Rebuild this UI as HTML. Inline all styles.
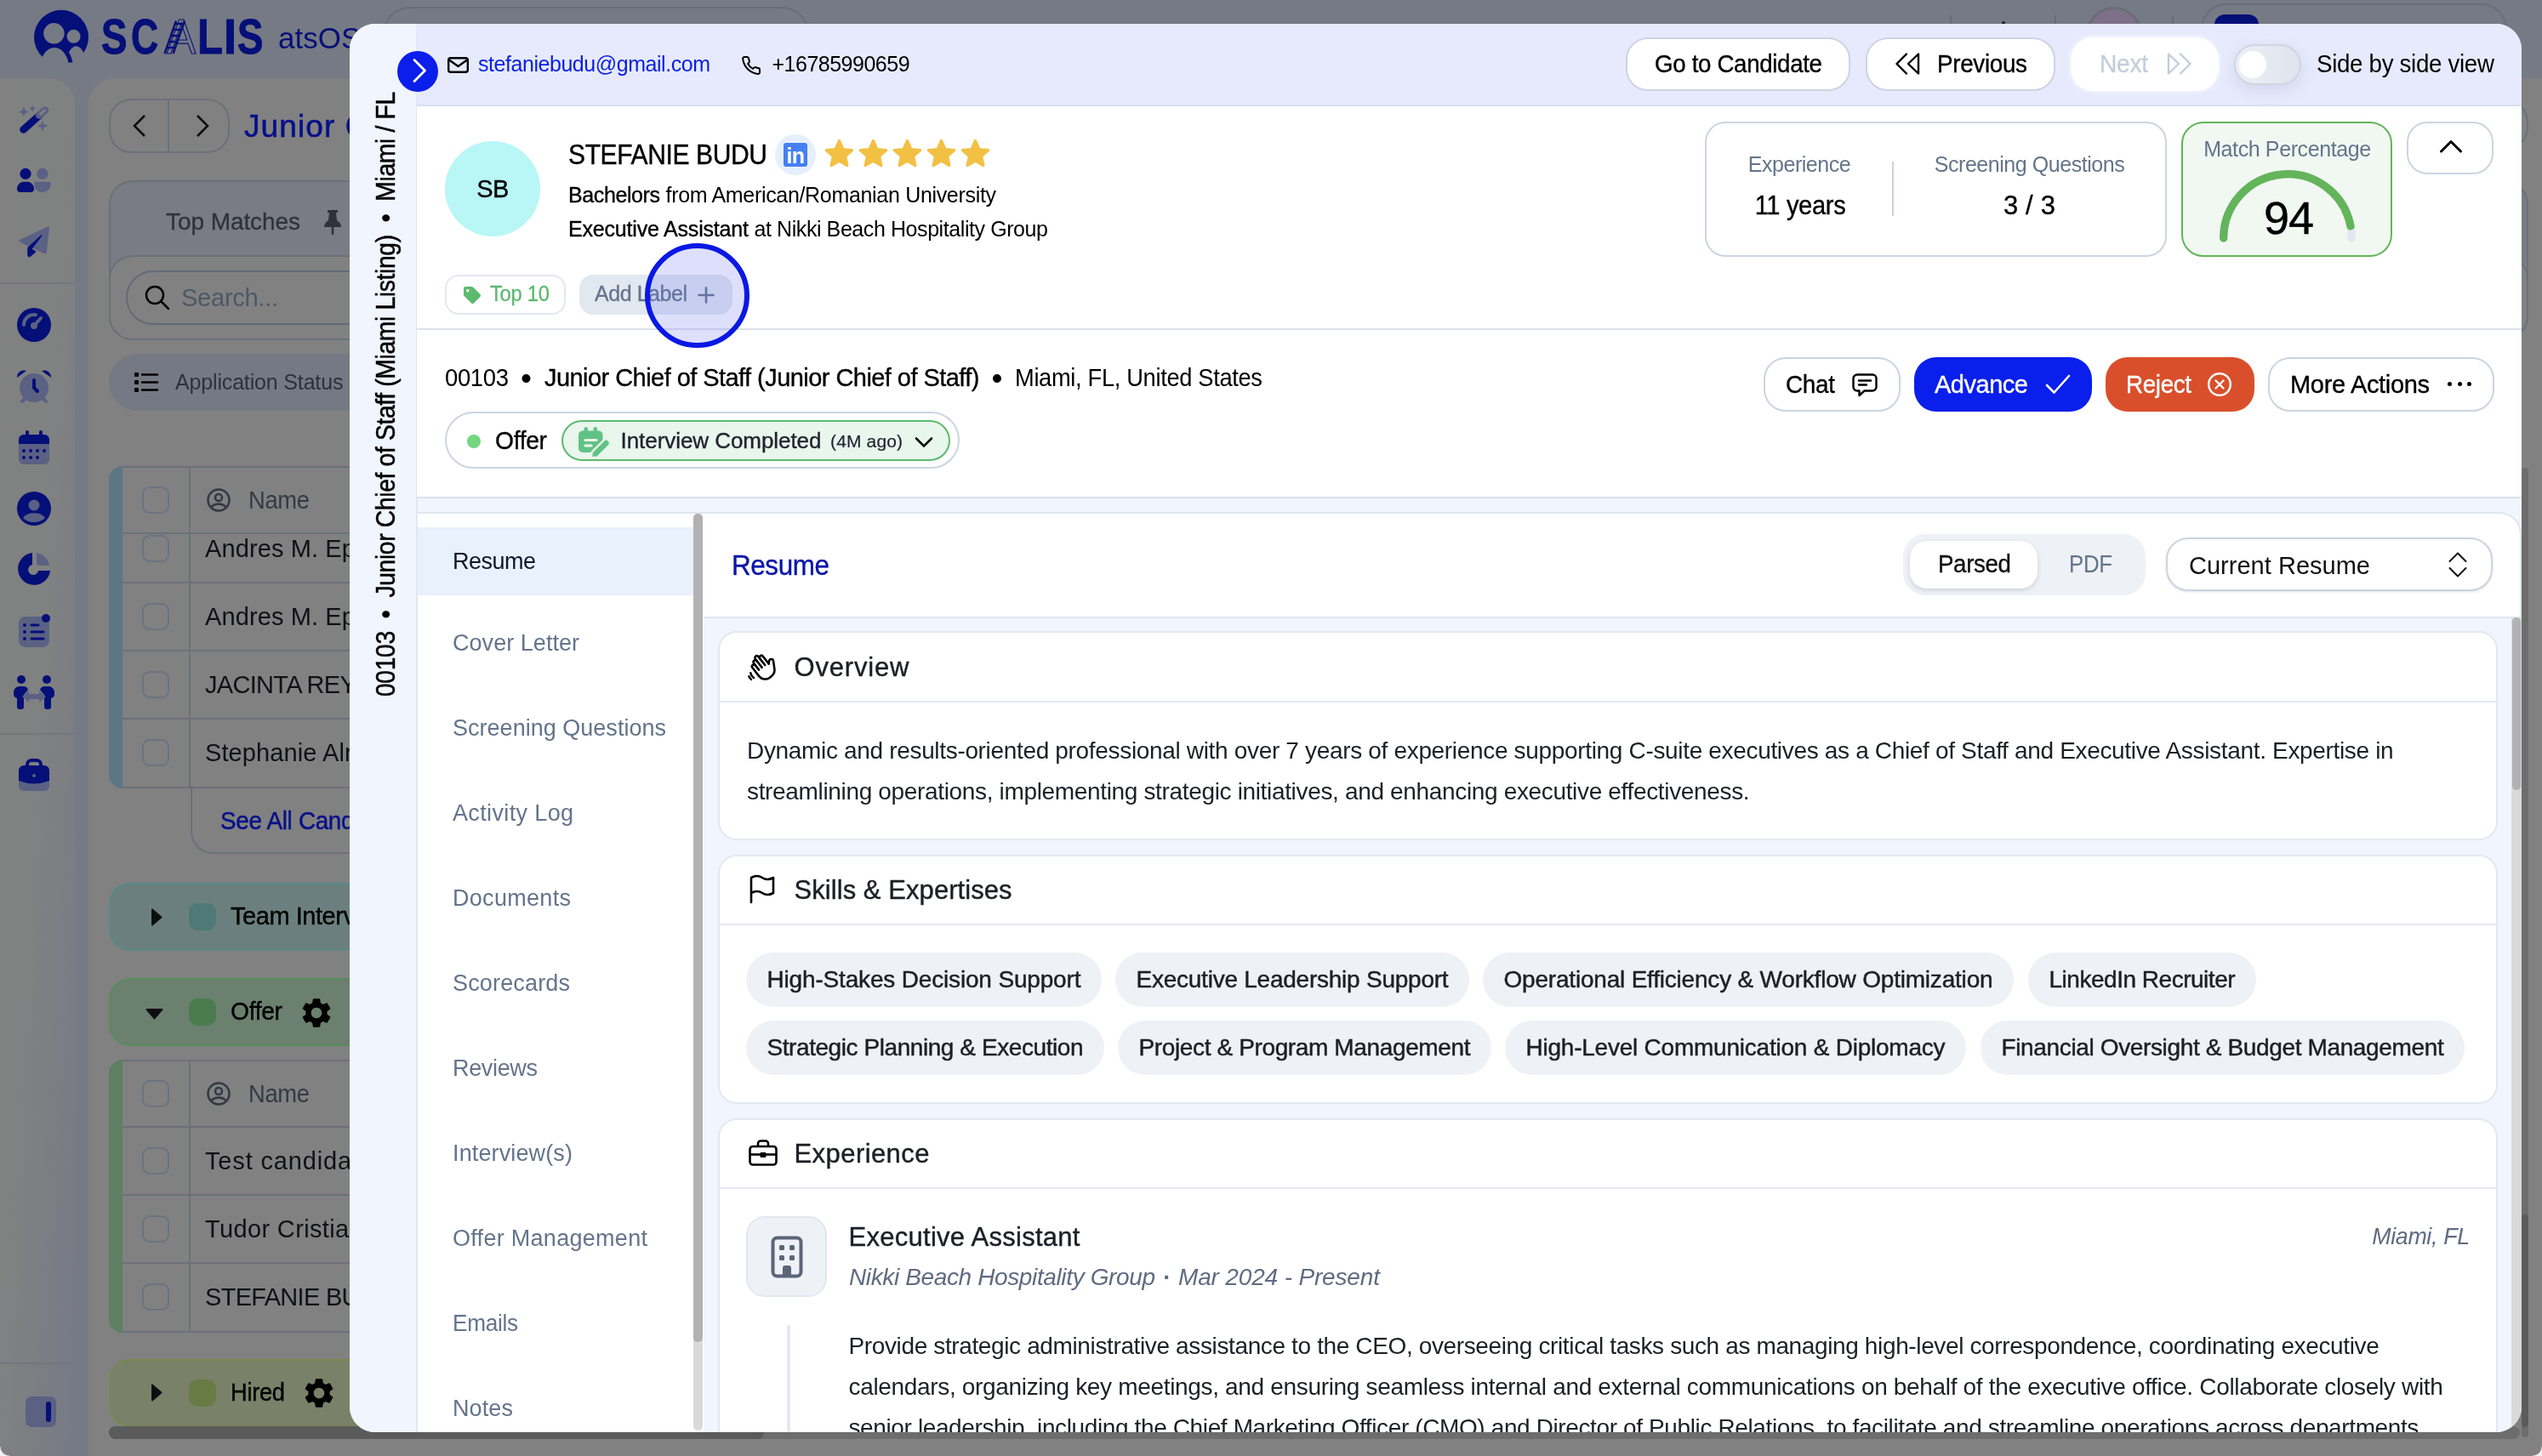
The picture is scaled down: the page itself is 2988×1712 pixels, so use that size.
<!DOCTYPE html>
<html lang="en"><head><meta charset="utf-8"><title>Candidate - STEFANIE BUDU</title>
<style>
html,body{margin:0;padding:0;}
html{overflow:hidden;}
body{width:2988px;height:1712px;overflow:hidden;position:relative;background:#808080;font-family:"Liberation Sans", sans-serif;}
div{position:absolute;box-sizing:border-box;}
svg{position:absolute;overflow:visible;}
.t{position:absolute;white-space:pre;line-height:1;}

</style></head><body>
<div style="left:0;top:0;width:2988px;height:1712px;overflow:hidden;will-change:transform;">
<div style="left:0px;top:0px;width:2988px;height:92px;background:#767a84;"></div>
<div style="left:0px;top:92px;width:2988px;height:1620px;background:#767a84;"></div>
<div style="left:0px;top:92px;width:88px;height:1620px;background:linear-gradient(93deg,#818181 0%,#808181 48%,#767a86 100%);border-top-right-radius:30px;"></div>
<div style="left:104px;top:92px;width:2884px;height:1620px;background:#818181;border-top-left-radius:30px;"></div>
<svg style="left:40px;top:10px" width="66" height="68" viewBox="0 0 66 68">
<defs><mask id="lgm"><rect width="66" height="68" fill="#000"/><circle cx="32" cy="33.800" r="32" fill="#fff"/>
<circle cx="46.600" cy="32.800" r="8" fill="#000"/>
<ellipse cx="49.500" cy="66" rx="11.500" ry="21.700" fill="#000"/>
<path d="M24 41 A22 29 0 0 1 46 70 L24 70Z" fill="#fff"/>
<ellipse cx="24" cy="70" rx="17" ry="24" fill="#000"/>
<circle cx="23.400" cy="29.300" r="12.200" fill="#000"/>
<rect x="0" y="63.500" width="66" height="6" fill="#000"/>
</mask></defs>
<rect width="66" height="68" fill="#050f78" mask="url(#lgm)"/></svg>
<span id="t1" class="t" style="top:14.6px;font-size:57px;color:#050f78;font-weight:700;left:118.5px;transform:scaleX(0.8);transform-origin:0 0;-webkit-text-stroke:1px #050f78;">S</span>
<span id="t2" class="t" style="top:14.6px;font-size:57px;color:#050f78;font-weight:700;left:153.5px;transform:scaleX(0.78);transform-origin:0 0;-webkit-text-stroke:1px #050f78;">C</span>
<span id="t3" class="t" style="top:14.6px;font-size:57px;color:#050f78;left:196px;transform:scaleX(.9);transform-origin:0 0;-webkit-text-fill-color:transparent;-webkit-text-stroke:1.200px #050f78;">A</span>
<span id="t4" class="t" style="top:14.6px;font-size:57px;color:#050f78;font-weight:700;left:232px;transform:scaleX(0.86);transform-origin:0 0;-webkit-text-stroke:1px #050f78;">L</span>
<span id="t5" class="t" style="top:14.6px;font-size:57px;color:#050f78;font-weight:700;left:263px;transform:scaleX(0.95);transform-origin:0 0;-webkit-text-stroke:1px #050f78;">I</span>
<span id="t6" class="t" style="top:14.6px;font-size:57px;color:#050f78;font-weight:700;left:279px;transform:scaleX(0.8);transform-origin:0 0;-webkit-text-stroke:1px #050f78;">S</span>
<svg style="left:190px;top:23px" width="44" height="41" viewBox="0 0 44 41"><g stroke="#050f78" stroke-width="2.400" fill="none"><path d="M3.500 40 L17 1.500 M13.500 40 L27 1.500 M6 33 h10 M8.500 26 h10 M11 19 h10 M13.500 12 h10 M16 5 h10"/></g></svg>
<span id="t7" class="t" style="top:27.2px;font-size:35px;color:#050f78;left:327px;letter-spacing:0px;">atsOS</span>
<div style="left:450px;top:8px;width:501px;height:64px;border:2px solid #696d77;border-radius:32px;"></div>
<div style="left:2292px;top:18px;width:2px;height:52px;background:#696d77;"></div>
<div style="left:2415px;top:18px;width:2px;height:52px;background:#696d77;"></div>
<div style="left:2553px;top:18px;width:2px;height:52px;background:#696d77;"></div>
<div style="left:2353px;top:25px;width:4px;height:4px;background:#222;border-radius:50%;"></div>
<div style="left:2452px;top:8px;width:66px;height:66px;background:#7e7088;border:3px solid #696d77;border-radius:50%;"></div>
<div style="left:2587px;top:4px;width:360px;height:76px;border:2px solid #696d77;border-radius:30px;"></div>
<div style="left:2603px;top:17px;width:52px;height:52px;background:#050f78;border-radius:12px;"></div>
<svg style="left:18px;top:120px" width="44" height="40" viewBox="18 120 44 40"><path d="M27.500 152.500 L46.500 135.500" stroke="#050f78" stroke-width="8.500" stroke-linecap="round"/><path d="M46 135.500 L53 129.500" stroke="#5b6183" stroke-width="8.500" stroke-linecap="round"/><path d="M47.500 134 L52.500 129.800" stroke="#808080" stroke-width="3" stroke-linecap="round"/><g fill="#5b6183"><path d="M28 125.500 l1.700 4.300 4.300 1.700 -4.300 1.700 -1.700 4.300 -1.700-4.300 -4.300-1.700 4.300-1.700z"/><path d="M38 123.500 l1.200 2.800 2.800 1.200 -2.800 1.200 -1.200 2.800 -1.200-2.800 -2.800-1.200 2.800-1.200z"/><path d="M50 141.500 l1.800 4.700 4.700 1.800 -4.700 1.800 -1.800 4.700 -1.800-4.700 -4.700-1.800 4.700-1.800z"/></g></svg>
<svg style="left:18px;top:194px" width="46" height="36" viewBox="18 194 46 36"><circle cx="30" cy="204.300" r="6.600" fill="#050f78"/><path d="M20 222 a8 8 0 0 1 8-8.300 h4 a8 8 0 0 1 8 8.300 a3.500 3.500 0 0 1-3.500 4 h-13 a3.500 3.500 0 0 1-3.500-4z" fill="#050f78"/><circle cx="50" cy="204.300" r="6.600" fill="#5b6183"/><path d="M40.500 213.700 h17 a2.500 2.500 0 0 1 2.500 3 a10 10 0 0 1-10 9.300 a10 10 0 0 1-9.500-6z" fill="#5b6183"/></svg>
<svg style="left:18px;top:262px" width="44" height="44" viewBox="18 262 44 44"><path d="M23 284.500 a1.500 1.500 0 0 1 .3-2.600 L56 266.500 a1.500 1.500 0 0 1 2 1.600 L54.800 297 a1.800 1.800 0 0 1-2.600 1.300z" fill="#5b6183"/><path d="M48.600 277 L33 291.500 V300 a1.500 1.500 0 0 0 2.600 1 L41.500 296 L36.500 293z" fill="#050f78" stroke="#050f78" stroke-width="1.500" stroke-linejoin="round"/></svg>
<div style="left:0px;top:332px;width:88px;height:2px;background:#72777f;"></div>
<svg style="left:20.0px;top:362.0px" width="40" height="40" viewBox="0 0 40 40"><circle cx="20" cy="20" r="20" fill="#050f78"/><path d="M8 20 a12 12 0 0 1 14-11.800" fill="none" stroke="#5b6183" stroke-width="4" stroke-linecap="round"/><path d="M20 21 L28 12" stroke="#5b6183" stroke-width="4" stroke-linecap="round"/><circle cx="20" cy="21" r="4" fill="#5b6183"/></svg>
<svg style="left:20.0px;top:434.0px" width="40" height="40" viewBox="0 0 40 40"><circle cx="20" cy="22" r="17" fill="#5b6183"/><path d="M0 10 a8 8 0 0 1 11-8z M40 10 a8 8 0 0 0-11-8z" fill="#050f78"/><path d="M20 13 v9 l4 4" fill="none" stroke="#050f78" stroke-width="4" stroke-linecap="round"/><path d="M6 38 l4-4 M34 38 l-4-4" stroke="#5b6183" stroke-width="4" stroke-linecap="round"/></svg>
<svg style="left:20.0px;top:506.0px" width="40" height="40" viewBox="0 0 40 40"><rect x="2" y="5" width="36" height="35" rx="6" fill="#5b6183"/><path d="M2 16 v-5 a6 6 0 0 1 6-6 h24 a6 6 0 0 1 6 6 v5z" fill="#050f78"/><rect x="10" y="0" width="4" height="9" rx="2" fill="#050f78"/><rect x="26" y="0" width="4" height="9" rx="2" fill="#050f78"/><g fill="#050f78"><circle cx="8" cy="24" r="2"/><circle cx="16" cy="24" r="2"/><circle cx="24" cy="24" r="2"/><circle cx="32" cy="24" r="2"/><circle cx="8" cy="32" r="2"/><circle cx="16" cy="32" r="2"/><circle cx="24" cy="32" r="2"/></g></svg>
<svg style="left:20.0px;top:578.0px" width="40" height="40" viewBox="0 0 40 40"><circle cx="20" cy="20" r="20" fill="#050f78"/><circle cx="20" cy="16" r="6.500" fill="#5b6183"/><path d="M7 31 a14 9 0 0 1 26 0 a16 12 0 0 1-26 0z" fill="#5b6183"/></svg>
<svg style="left:20.0px;top:649.0px" width="40" height="40" viewBox="0 0 40 40"><path d="M18 1 v14 a6 6 0 1 0 7 7 h14 A19 19 0 1 1 18 1z" fill="#050f78"/><path d="M23 1 a18 18 0 0 1 15 15 h-13 a4 4 0 0 0-2-2z" fill="#5b6183"/></svg>
<svg style="left:20.0px;top:721.0px" width="40" height="40" viewBox="0 0 40 40"><rect x="2" y="4" width="36" height="36" rx="8" fill="#5b6183"/><circle cx="34" cy="6" r="5" fill="#050f78"/><g stroke="#050f78" stroke-width="3" stroke-linecap="round"><path d="M17 14h8M17 22h14M17 30h14"/></g><g fill="#050f78"><circle cx="9" cy="14" r="2"/><circle cx="9" cy="22" r="2"/><circle cx="9" cy="30" r="2"/></g></svg>
<svg style="left:20.0px;top:794.0px" width="40" height="40" viewBox="0 0 40 40"><circle cx="5" cy="5" r="5" fill="#050f78"/><circle cx="35" cy="5" r="5" fill="#050f78"/><path d="M-4 20 a7 7 0 0 1 7-7 h4 a6 6 0 0 1 6 4 l-5 6 v14 a3 3 0 0 1-3 3 h-2 a3 3 0 0 1-3-3 v-10 a5 5 0 0 1-4-5z" fill="#050f78"/><path d="M44 20 a7 7 0 0 0-7-7 h-4 a6 6 0 0 0-6 4 l5 6 v14 a3 3 0 0 0 3 3 h2 a3 3 0 0 0 3-3 v-10 a5 5 0 0 0 4-5z" fill="#050f78"/><path d="M6 25 l8-7 v4 h12 v-4 l8 7 -8 7 v-4 h-12 v4z" fill="#5b6183"/></svg>
<div style="left:0px;top:862px;width:88px;height:2px;background:#72777f;"></div>
<svg style="left:20.0px;top:892.0px" width="40" height="40" viewBox="0 0 40 40"><rect x="2" y="18" width="36" height="20" rx="6" fill="#5b6183"/><path d="M12 10 v-3 a5 5 0 0 1 5-5 h6 a5 5 0 0 1 5 5 v3" fill="none" stroke="#050f78" stroke-width="4"/><path d="M2 14 a6 6 0 0 1 6-6 h24 a6 6 0 0 1 6 6 v12 q-18 7-36 0z" fill="#050f78"/><circle cx="20" cy="20" r="2" fill="#5b6183"/></svg>
<div style="left:0px;top:1602px;width:88px;height:2px;background:#72777f;"></div>
<div style="left:30px;top:1642px;width:36px;height:36px;background:#5b6183;border-radius:7px;"></div>
<div style="left:54px;top:1648px;width:6px;height:24px;background:#050f78;border-radius:3px;"></div>
<div style="left:128px;top:116px;width:142px;height:64px;border:2px solid #6b717b;border-radius:26px;"></div>
<div style="left:197px;top:116px;width:2px;height:64px;background:#6b717b;"></div>
<svg style="left:154px;top:134px" width="20" height="28" viewBox="0 0 20 28"><path d="M16 2 L4 14 L16 26" fill="none" stroke="#0e0e10" stroke-width="2.600"/></svg>
<svg style="left:228px;top:134px" width="20" height="28" viewBox="0 0 20 28"><path d="M4 2 L16 14 L4 26" fill="none" stroke="#0e0e10" stroke-width="2.600"/></svg>
<span id="t8" class="t" style="top:129.6px;font-size:37px;color:#061089;-webkit-text-stroke:0.6px;left:287px;letter-spacing:1.09px;">Junior Chief of Staff</span>
<div style="left:128px;top:212px;width:2844px;height:188px;background:#797c85;border:2px solid #6b717b;border-radius:28px;"></div>
<span id="t9" class="t" style="top:247.2px;font-size:28px;color:#2e333b;-webkit-text-stroke:0.3px;left:195px;letter-spacing:-0.07px;">Top Matches</span>
<svg style="left:380px;top:246px" width="22" height="30" viewBox="0 0 22 30"><path d="M5 1 h12 v3 h-2 l1 9 q5 3 5 8 h-20 q0-5 5-8 l1-9 h-2z" fill="#2e333b"/><path d="M11 21 v8" stroke="#2e333b" stroke-width="2.500" stroke-linecap="round"/></svg>
<div style="left:128px;top:300px;width:2844px;height:100px;background:#818181;border:2px solid #6b717b;border-radius:28px;"></div>
<div style="left:2700px;top:118px;width:272px;height:58px;border:2px solid #6b717b;border-radius:26px;"></div>
<div style="left:148px;top:318px;width:1232px;height:64px;border:2px solid #626b7a;border-radius:32px;"></div>
<svg style="left:170px;top:335px" width="30" height="30" viewBox="0 0 30 30"><circle cx="12" cy="12" r="10" fill="none" stroke="#000" stroke-width="2.500"/><path d="M19.500 19.500 L28 28" stroke="#000" stroke-width="2.500" stroke-linecap="round"/></svg>
<span id="t10" class="t" style="top:334.5px;font-size:30px;color:#4d5868;left:213px;letter-spacing:-0.36px;transform:scaleX(0.9728);transform-origin:0 50%;">Search...</span>
<div style="left:128px;top:416px;width:1272px;height:67px;background:#747983;border-radius:34px;"></div>
<svg style="left:158px;top:438px" width="28" height="23" viewBox="0 0 28 23"><g fill="#000"><rect x="0" y="0" width="5" height="5" rx="1"/><rect x="0" y="9" width="5" height="5" rx="1"/><rect x="0" y="18" width="5" height="5" rx="1"/></g><path d="M9 2.500h18M9 11.500h18M9 20.500h18" stroke="#000" stroke-width="2.600" stroke-linecap="round"/></svg>
<span id="t11" class="t" style="top:436.8px;font-size:25px;color:#2c313b;left:206px;letter-spacing:-0.16px;">Application Status is</span>
<div style="left:144px;top:548px;width:1256px;height:379px;border-top:2px solid #6b717b;border-bottom:2px solid #6b717b;"></div>
<div style="left:128px;top:548px;width:16px;height:379px;background:#5e7684;border-radius:22px 0 0 22px;"></div>
<div style="left:221.5px;top:548px;width:2.0px;height:379px;background:#6b717b;"></div>
<div style="left:144px;top:626px;width:1256px;height:2px;background:#6b717b;"></div>
<div style="left:144px;top:684px;width:1256px;height:2px;background:#6b717b;"></div>
<div style="left:144px;top:764px;width:1256px;height:2px;background:#6b717b;"></div>
<div style="left:144px;top:844px;width:1256px;height:2px;background:#6b717b;"></div>
<div style="left:167px;top:572px;width:32px;height:32px;border:2px solid #6a7384;border-radius:9px;"></div>
<svg style="left:243px;top:574px" width="28" height="28" viewBox="0 0 28 28"><circle cx="14" cy="14" r="12.500" fill="none" stroke="#323a47" stroke-width="2.600"/><circle cx="14" cy="11" r="4" fill="none" stroke="#323a47" stroke-width="2.600"/><path d="M5.500 22.500 a9.500 7 0 0 1 17 0" fill="none" stroke="#323a47" stroke-width="2.600"/></svg>
<span id="t12" class="t" style="top:573.9px;font-size:29px;color:#323a47;left:292px;letter-spacing:-0.35px;transform:scaleX(0.9435);transform-origin:0 50%;">Name</span>
<div style="left:167px;top:629px;width:32px;height:32px;border:2px solid #6a7384;border-radius:9px;"></div>
<span id="t13" class="t" style="top:631.4px;font-size:29px;color:#101114;left:241px;letter-spacing:0.1px;">Andres M. Epstein</span>
<div style="left:167px;top:709px;width:32px;height:32px;border:2px solid #6a7384;border-radius:9px;"></div>
<span id="t14" class="t" style="top:711.4px;font-size:29px;color:#101114;left:241px;letter-spacing:0.1px;">Andres M. Epstein</span>
<div style="left:167px;top:789px;width:32px;height:32px;border:2px solid #6a7384;border-radius:9px;"></div>
<span id="t15" class="t" style="top:791.4px;font-size:29px;color:#101114;left:241px;letter-spacing:-0.7px;">JACINTA REYES</span>
<div style="left:167px;top:869px;width:32px;height:32px;border:2px solid #6a7384;border-radius:9px;"></div>
<span id="t16" class="t" style="top:871.4px;font-size:29px;color:#101114;left:241px;letter-spacing:0.1px;">Stephanie Alrich</span>
<div style="left:224px;top:924px;width:1176px;height:80px;border:2px solid #6b717b;border-top:none;border-radius:0 0 0 26px;"></div>
<span id="t17" class="t" style="top:951.4px;font-size:29px;color:#071189;-webkit-text-stroke:0.5px;left:259px;letter-spacing:-0.35px;transform:scaleX(0.9618);transform-origin:0 50%;">See All Candidates</span>
<div style="left:128px;top:1038px;width:1272px;height:80px;background:#6b807e;border:2px solid #578889;border-radius:25px;"></div>
<svg style="left:177px;top:1068px" width="14" height="21" viewBox="0 0 14 21"><path d="M1 1.500 a1 1 0 0 1 1.600-.8 l10.500 9 a1 1 0 0 1 0 1.600 l-10.500 9 a1 1 0 0 1-1.600-.8z" fill="#0d0e10"/></svg>
<div style="left:222px;top:1062px;width:32px;height:32px;background:#4f7976;border-radius:10px;"></div>
<span id="t18" class="t" style="top:1063.3px;font-size:29px;color:#000;-webkit-text-stroke:0.4px;left:271px;letter-spacing:-0.46px;">Team Interview</span>
<div style="left:128px;top:1150px;width:1272px;height:80px;background:#6b806f;border:2px solid #568d5b;border-radius:25px;"></div>
<svg style="left:171px;top:1185px" width="22" height="14" viewBox="0 0 22 14"><path d="M1.500 1 a1 1 0 0 0-.8 1.600 l9 10.500 a1 1 0 0 0 1.600 0 l9-10.500 a1 1 0 0 0-.8-1.600z" fill="#0d0e10"/></svg>
<div style="left:222px;top:1174px;width:32px;height:32px;background:#4a7c4f;border-radius:10px;"></div>
<span id="t19" class="t" style="top:1175.3px;font-size:29px;color:#000;-webkit-text-stroke:0.4px;left:271px;letter-spacing:-0.35px;transform:scaleX(0.9753);transform-origin:0 50%;">Offer</span>
<svg style="left:351px;top:1170px" width="42" height="42" viewBox="0 0 24 24"><path d="M19.140 12.940c.040-.300.060-.610.060-.940 0-.320-.020-.640-.070-.940l2.030-1.580a.490.490 0 0 0 .120-.610l-1.920-3.320a.488.488 0 0 0-.590-.220l-2.390.960c-.500-.380-1.030-.700-1.620-.940l-.360-2.540a.484.484 0 0 0-.480-.410h-3.840c-.240 0-.430.170-.470.410l-.360 2.540c-.590.240-1.130.570-1.620.940l-2.390-.960c-.220-.080-.470 0-.590.220L2.740 8.870c-.120.210-.080.470.120.610l2.030 1.580c-.050.300-.090.630-.090.940s.020.640.070.940l-2.030 1.580a.490.490 0 0 0-.120.610l1.920 3.320c.120.220.370.290.590.220l2.390-.960c.500.380 1.030.700 1.620.940l.360 2.540c.050.240.240.410.480.410h3.840c.240 0 .440-.170.470-.410l.360-2.540c.590-.240 1.130-.560 1.620-.940l2.390.960c.220.080.470 0 .590-.220l1.920-3.320c.120-.220.070-.470-.120-.610l-2.010-1.580zM12 15.600c-1.980 0-3.600-1.620-3.600-3.600s1.620-3.600 3.600-3.600 3.600 1.620 3.600 3.600-1.620 3.600-3.600 3.600z" fill="#000"/></svg>
<div style="left:144px;top:1246px;width:1256px;height:321px;border-top:2px solid #6b717b;border-bottom:2px solid #6b717b;"></div>
<div style="left:128px;top:1246px;width:16px;height:321px;background:#5d8062;border-radius:22px 0 0 22px;"></div>
<div style="left:221.5px;top:1246px;width:2.0px;height:321px;background:#6b717b;"></div>
<div style="left:144px;top:1324px;width:1256px;height:2px;background:#6b717b;"></div>
<div style="left:144px;top:1404px;width:1256px;height:2px;background:#6b717b;"></div>
<div style="left:144px;top:1484px;width:1256px;height:2px;background:#6b717b;"></div>
<div style="left:167px;top:1270px;width:32px;height:32px;border:2px solid #6a7384;border-radius:9px;"></div>
<svg style="left:243px;top:1272px" width="28" height="28" viewBox="0 0 28 28"><circle cx="14" cy="14" r="12.500" fill="none" stroke="#323a47" stroke-width="2.600"/><circle cx="14" cy="11" r="4" fill="none" stroke="#323a47" stroke-width="2.600"/><path d="M5.500 22.500 a9.500 7 0 0 1 17 0" fill="none" stroke="#323a47" stroke-width="2.600"/></svg>
<span id="t20" class="t" style="top:1271.8px;font-size:29px;color:#323a47;left:292px;letter-spacing:-0.35px;transform:scaleX(0.9435);transform-origin:0 50%;">Name</span>
<div style="left:167px;top:1349px;width:32px;height:32px;border:2px solid #6a7384;border-radius:9px;"></div>
<span id="t21" class="t" style="top:1351.3px;font-size:29px;color:#101114;left:241px;letter-spacing:0.85px;">Test candidate</span>
<div style="left:167px;top:1429px;width:32px;height:32px;border:2px solid #6a7384;border-radius:9px;"></div>
<span id="t22" class="t" style="top:1431.3px;font-size:29px;color:#101114;left:241px;letter-spacing:0.35px;">Tudor Cristian</span>
<div style="left:167px;top:1509px;width:32px;height:32px;border:2px solid #6a7384;border-radius:9px;"></div>
<span id="t23" class="t" style="top:1511.3px;font-size:29px;color:#101114;left:241px;letter-spacing:-0.7px;">STEFANIE BUDU</span>
<div style="left:128px;top:1598px;width:1272px;height:80px;background:#798168;border:2px solid #748a4f;border-radius:25px;"></div>
<svg style="left:177px;top:1627px" width="14" height="21" viewBox="0 0 14 21"><path d="M1 1.500 a1 1 0 0 1 1.600-.8 l10.500 9 a1 1 0 0 1 0 1.600 l-10.500 9 a1 1 0 0 1-1.600-.8z" fill="#0d0e10"/></svg>
<div style="left:222px;top:1622px;width:32px;height:32px;background:#697b45;border-radius:10px;"></div>
<span id="t24" class="t" style="top:1623.3px;font-size:29px;color:#000;-webkit-text-stroke:0.4px;left:271px;letter-spacing:-0.35px;transform:scaleX(0.9423);transform-origin:0 50%;">Hired</span>
<svg style="left:354px;top:1617px" width="42" height="42" viewBox="0 0 24 24"><path d="M19.140 12.940c.040-.300.060-.610.060-.940 0-.320-.020-.640-.070-.940l2.030-1.580a.490.490 0 0 0 .120-.610l-1.920-3.320a.488.488 0 0 0-.590-.220l-2.390.960c-.500-.380-1.030-.700-1.620-.940l-.360-2.540a.484.484 0 0 0-.480-.410h-3.840c-.240 0-.430.170-.470.410l-.360 2.540c-.590.240-1.130.570-1.620.940l-2.390-.960c-.220-.080-.470 0-.590.220L2.740 8.870c-.120.210-.080.470.120.610l2.030 1.580c-.050.300-.090.630-.090.940s.020.640.070.940l-2.030 1.580a.490.490 0 0 0-.120.610l1.920 3.320c.120.220.370.290.590.220l2.390-.960c.500.380 1.030.700 1.620.940l.360 2.540c.050.240.240.410.480.410h3.840c.240 0 .440-.170.470-.410l.360-2.540c.590-.240 1.130-.560 1.620-.940l2.390.960c.220.080.470 0 .590-.220l1.920-3.320c.120-.220.070-.470-.120-.610l-2.010-1.580zM12 15.600c-1.980 0-3.600-1.620-3.600-3.600s1.620-3.600 3.600-3.600 3.600 1.620 3.600 3.600-1.620 3.600-3.600 3.600z" fill="#000"/></svg>
<div style="left:128px;top:1677px;width:2834px;height:15px;background:#6d6d6d;border-radius:8px;"></div>
<div style="left:128px;top:1677px;width:770px;height:15px;background:#5b5b5b;border-radius:8px;"></div>
<div style="left:2964px;top:550px;width:8px;height:1140px;background:#6d6d6d;border-radius:4px;"></div>
<div style="left:2964px;top:1428px;width:8px;height:250px;background:#5b5b5b;border-radius:4px;"></div>
<div style="left:0;top:0;width:2988px;height:1712px;clip-path:inset(28px 24px 28px 411px round 30px);">
<div style="left:411px;top:28px;width:2553px;height:1656px;background:#f1f5fd;"></div>
<div style="left:411px;top:28px;width:80px;height:1656px;background:#f1f5fd;border-right:2px solid #e1e7f3;"></div>
<div style="left:490px;top:28px;width:2474px;height:97px;background:#e6eafc;border-bottom:2px solid #d9dff0;"></div>
<div style="left:490px;top:125px;width:2474px;height:460.5px;background:#fff;border-bottom:2px solid #dbe2ec;"></div>
<div style="left:490px;top:386px;width:2474px;height:2px;background:#dbe2ec;"></div>
<span id="t25" class="t" style="left:437.6px;top:819px;font-size:31px;color:#000;-webkit-text-stroke:0.5px;letter-spacing:-0.37px;transform:rotate(-90deg) scaleX(0.9108);transform-origin:0 0;">00103  •  Junior Chief of Staff (Miami Listing)  •  Miami / FL</span>
<svg style="left:526px;top:67px" width="25" height="19" viewBox="0 0 25 19"><rect x="1.200" y="1.200" width="22.600" height="16.600" rx="2.500" fill="none" stroke="#000" stroke-width="2.400"/><path d="M2 3.500 L12.500 11 L23 3.500" fill="none" stroke="#000" stroke-width="2.400" stroke-linejoin="round"/></svg>
<span id="t26" class="t" style="top:63.2px;font-size:25px;color:#0b1fe0;left:562px;letter-spacing:-0.45px;">stefaniebudu@gmail.com</span>
<svg style="left:871px;top:65px" width="24" height="24" viewBox="0 0 24 24"><path d="M22 16.920v3a2 2 0 0 1-2.180 2 19.790 19.790 0 0 1-8.630-3.070 19.500 19.500 0 0 1-6-6 19.790 19.790 0 0 1-3.070-8.670A2 2 0 0 1 4.110 2h3a2 2 0 0 1 2 1.720c.127.960.362 1.903.700 2.810a2 2 0 0 1-.450 2.110L8.090 9.910a16 16 0 0 0 6 6l1.270-1.270a2 2 0 0 1 2.110-.450c.907.338 1.850.573 2.810.700A2 2 0 0 1 22 16.920z" fill="none" stroke="#000" stroke-width="2" stroke-linecap="round" stroke-linejoin="round"/></svg>
<span id="t27" class="t" style="top:63.2px;font-size:25px;color:#000;left:907.5px;letter-spacing:-0.50px;">+16785990659</span>
<div style="left:1911px;top:44px;width:264px;height:63px;background:#fff;border:2px solid #cbd5e1;border-radius:26px;"></div>
<span id="t28" class="t" style="top:61.4px;font-size:29px;color:#000;-webkit-text-stroke:0.35px;left:1945px;letter-spacing:-0.35px;transform:scaleX(0.9548);transform-origin:0 50%;">Go to Candidate</span>
<div style="left:2193px;top:44px;width:223px;height:63px;background:#fff;border:2px solid #cbd5e1;border-radius:26px;"></div>
<svg style="left:2228px;top:62px" width="29" height="26" viewBox="0 0 29 26"><path d="M13 1.500 L1.500 13 L13 24.500 M27 1.500 L15 13 L27 24.500 Z" fill="none" stroke="#000" stroke-width="2.400" stroke-linejoin="round" stroke-linecap="round"/></svg>
<span id="t29" class="t" style="top:61.4px;font-size:29px;color:#000;-webkit-text-stroke:0.35px;left:2277px;letter-spacing:-0.35px;transform:scaleX(0.9602);transform-origin:0 50%;">Previous</span>
<div style="left:2434px;top:44px;width:174px;height:63px;background:#fff;border-radius:26px;"></div>
<div style="left:2434px;top:44px;width:174px;height:63px;border-radius:26px;box-shadow:0 0 6px rgba(255,255,255,.9);"></div>
<span id="t30" class="t" style="top:61.4px;font-size:29px;color:#c3cedb;-webkit-text-stroke:0.3px;left:2468px;letter-spacing:-0.35px;transform:scaleX(0.9728);transform-origin:0 50%;">Next</span>
<svg style="left:2547px;top:62px" width="29" height="26" viewBox="0 0 29 26"><path d="M16 1.500 L27.500 13 L16 24.500 M2 1.500 L14 13 L2 24.500 Z" fill="none" stroke="#c3cedb" stroke-width="2.400" stroke-linejoin="round" stroke-linecap="round"/></svg>
<div style="left:2626px;top:52px;width:79px;height:48px;background:linear-gradient(90deg,#eceff6,#dfe4ec);border:2px solid #cfd5df;border-radius:24px;box-shadow:0 6px 16px rgba(150,160,190,.25);"></div>
<div style="left:2632px;top:60px;width:32px;height:32px;background:#fff;border-radius:50%;"></div>
<span id="t31" class="t" style="top:61.4px;font-size:29px;color:#000;left:2723px;letter-spacing:-0.35px;transform:scaleX(0.9565);transform-origin:0 50%;">Side by side view</span>
<div style="left:523px;top:166px;width:112px;height:112px;background:#b9f6f6;border-radius:50%;"></div>
<span id="t32" class="t" style="top:207.8px;font-size:29px;color:#000;-webkit-text-stroke:0.35px;left:579px;letter-spacing:-0.69px;transform:translateX(-50%);transform-origin:50% 50%;">SB</span>
<span id="t33" class="t" style="top:164.9px;font-size:33px;color:#000;-webkit-text-stroke:0.4px;left:668px;letter-spacing:-0.40px;transform:scaleX(0.9089);transform-origin:0 50%;">STEFANIE BUDU</span>
<div style="left:911px;top:158px;width:48px;height:48px;background:#e6effd;border-radius:50%;"></div>
<div style="left:921px;top:168px;width:28px;height:28px;background:#457ff2;border-radius:3px;"></div>
<span id="t34" class="t" style="top:170.8px;font-size:25px;color:#fff;font-weight:700;left:935px;transform:translateX(-50%);letter-spacing:-0.5px;">in</span>
<svg style="left:969.0px;top:163px" width="35" height="34" viewBox="0 0 35 34"><path d="M17.500 2.500 l4.400 10 10.800 1.100 -8.100 7.300 2.300 10.700 -9.400-5.500 -9.400 5.500 2.300-10.700 -8.100-7.300 10.800-1.100z" fill="#f2c043" stroke="#f2c043" stroke-width="3.200" stroke-linejoin="round"/></svg>
<svg style="left:1009.1px;top:163px" width="35" height="34" viewBox="0 0 35 34"><path d="M17.500 2.500 l4.400 10 10.800 1.100 -8.100 7.300 2.300 10.700 -9.400-5.500 -9.400 5.500 2.300-10.700 -8.100-7.300 10.800-1.100z" fill="#f2c043" stroke="#f2c043" stroke-width="3.200" stroke-linejoin="round"/></svg>
<svg style="left:1049.2px;top:163px" width="35" height="34" viewBox="0 0 35 34"><path d="M17.500 2.500 l4.400 10 10.800 1.100 -8.100 7.300 2.300 10.700 -9.400-5.500 -9.400 5.500 2.300-10.700 -8.100-7.300 10.800-1.100z" fill="#f2c043" stroke="#f2c043" stroke-width="3.200" stroke-linejoin="round"/></svg>
<svg style="left:1089.3px;top:163px" width="35" height="34" viewBox="0 0 35 34"><path d="M17.500 2.500 l4.400 10 10.800 1.100 -8.100 7.300 2.300 10.700 -9.400-5.500 -9.400 5.500 2.300-10.700 -8.100-7.300 10.800-1.100z" fill="#f2c043" stroke="#f2c043" stroke-width="3.200" stroke-linejoin="round"/></svg>
<svg style="left:1129.4px;top:163px" width="35" height="34" viewBox="0 0 35 34"><path d="M17.500 2.500 l4.400 10 10.800 1.100 -8.100 7.300 2.300 10.700 -9.400-5.500 -9.400 5.500 2.300-10.700 -8.100-7.300 10.800-1.100z" fill="#f2c043" stroke="#f2c043" stroke-width="3.200" stroke-linejoin="round"/></svg>
<span id="t35" class="t" style="top:216.8px;font-size:25px;color:#000;-webkit-text-stroke:0.35px;left:668px;letter-spacing:-0.40px;">Bachelors</span>
<span id="t36" class="t" style="top:216.8px;font-size:25px;color:#000;left:782.5px;letter-spacing:-0.32px;">from American/Romanian University</span>
<span id="t37" class="t" style="top:257.2px;font-size:25px;color:#000;-webkit-text-stroke:0.35px;left:668px;letter-spacing:-0.19px;">Executive Assistant</span>
<span id="t38" class="t" style="top:257.2px;font-size:25px;color:#000;left:886.5px;letter-spacing:-0.42px;">at Nikki Beach Hospitality Group</span>
<div style="left:523px;top:323px;width:142px;height:47px;background:#fff;border:2px solid #e2e8f0;border-radius:16px;"></div>
<svg style="left:544px;top:336px" width="22" height="22" viewBox="0 0 22 22"><path d="M1 3 a2 2 0 0 1 2-2 h7.500 a2 2 0 0 1 1.400.600 l8.500 8.500 a2 2 0 0 1 0 2.800 l-7.500 7.500 a2 2 0 0 1-2.800 0 l-8.500-8.500 a2 2 0 0 1-.6-1.400z" fill="#5cba6e"/><circle cx="5.800" cy="5.800" r="1.700" fill="#fff"/></svg>
<span id="t39" class="t" style="top:333.2px;font-size:25px;color:#5cba6e;-webkit-text-stroke:0.3px;left:576px;letter-spacing:-0.30px;transform:scaleX(0.9516);transform-origin:0 50%;">Top 10</span>
<div style="left:681px;top:323px;width:180px;height:47px;background:#e2e8f0;border-radius:16px;"></div>
<span id="t40" class="t" style="top:333.2px;font-size:25px;color:#64748b;-webkit-text-stroke:0.3px;left:699px;letter-spacing:-0.45px;">Add Label</span>
<svg style="left:820px;top:337px" width="20" height="20" viewBox="0 0 20 20"><path d="M10 1.500 V18.500 M1.500 10 H18.500" stroke="#64748b" stroke-width="2.600" stroke-linecap="round"/></svg>
<div style="left:757.5px;top:286px;width:123.0px;height:123px;border:6px solid #0a18e4;border-radius:50%;background:rgba(105,112,235,.22);"></div>
<div style="left:2004px;top:143px;width:543px;height:159px;background:#fff;border:2px solid #cbd5e1;border-radius:24px;"></div>
<span id="t41" class="t" style="top:181.2px;font-size:25px;color:#64748b;left:2115px;letter-spacing:-0.45px;transform:translateX(-50%);transform-origin:50% 50%;">Experience</span>
<span id="t42" class="t" style="top:226.2px;font-size:31px;color:#000;-webkit-text-stroke:0.35px;left:2115.5px;letter-spacing:-0.37px;transform:translateX(-50%) scaleX(0.9386);transform-origin:50% 50%;">11 years</span>
<div style="left:2224px;top:190px;width:2px;height:64px;background:#cbd5e1;"></div>
<span id="t43" class="t" style="top:181.2px;font-size:25px;color:#64748b;left:2385.5px;letter-spacing:-0.45px;transform:translateX(-50%);transform-origin:50% 50%;">Screening Questions</span>
<span id="t44" class="t" style="top:226.2px;font-size:31px;color:#000;-webkit-text-stroke:0.35px;left:2385.5px;letter-spacing:0.17px;transform:translateX(-50%);transform-origin:50% 50%;">3 / 3</span>
<div style="left:2564px;top:143px;width:248px;height:159px;background:#f1f8f2;border:2px solid #62b45a;border-radius:26px;"></div>
<span id="t45" class="t" style="top:163.2px;font-size:25px;color:#64748b;left:2688.5px;letter-spacing:-0.39px;transform:translateX(-50%);transform-origin:50% 50%;">Match Percentage</span>
<svg style="left:2600px;top:195px" width="180" height="100" viewBox="0 0 180 100"><path d="M13.700 85 A75.300 75.300 0 0 1 164.300 85" fill="none" stroke="#e3e6f0" stroke-width="9.300" stroke-linecap="round"/><path d="M13.700 85 A75.300 75.300 0 0 1 162.970 70.890" fill="none" stroke="#63b45a" stroke-width="9.300" stroke-linecap="round"/></svg>
<span id="t46" class="t" style="top:228.6px;font-size:54px;color:#000;-webkit-text-stroke:0.4px;left:2690px;letter-spacing:-1.08px;transform:translateX(-50%);transform-origin:50% 50%;">94</span>
<div style="left:2829px;top:143px;width:102px;height:62px;background:#fff;border:2px solid #cbd5e1;border-radius:24px;"></div>
<svg style="left:2867px;top:163px" width="28" height="18" viewBox="0 0 28 18"><path d="M2.500 15 L14 3.500 L25.500 15" fill="none" stroke="#000" stroke-width="3" stroke-linecap="round" stroke-linejoin="round"/></svg>
<span id="t47" class="t" style="top:429.9px;font-size:29px;color:#000;left:523px;letter-spacing:-0.35px;transform:scaleX(0.9462);transform-origin:0 50%;">00103</span>
<span id="t48" class="t" style="top:426.1px;font-size:37px;color:#000;left:618.5px;transform:translateX(-50%);">•</span>
<span id="t49" class="t" style="top:429.9px;font-size:29px;color:#000;-webkit-text-stroke:0.35px;left:640px;letter-spacing:-0.55px;">Junior Chief of Staff (Junior Chief of Staff)</span>
<span id="t50" class="t" style="top:426.1px;font-size:37px;color:#000;left:1172px;transform:translateX(-50%);">•</span>
<span id="t51" class="t" style="top:429.9px;font-size:29px;color:#000;left:1193px;letter-spacing:-0.35px;transform:scaleX(0.9402);transform-origin:0 50%;">Miami, FL, United States</span>
<div style="left:523px;top:484px;width:605px;height:67px;background:#fff;border:2px solid #cbd5e1;border-radius:34px;"></div>
<div style="left:549px;top:510.5px;width:16px;height:16.0px;background:#74d680;border-radius:50%;"></div>
<span id="t52" class="t" style="top:503.9px;font-size:29px;color:#000;-webkit-text-stroke:0.35px;left:582px;letter-spacing:-0.35px;transform:scaleX(0.9753);transform-origin:0 50%;">Offer</span>
<div style="left:659.5px;top:494px;width:457.5px;height:47.5px;background:#e9f6ec;border:2px solid #5cba6e;border-radius:24px;"></div>
<svg style="left:680px;top:502px" width="38" height="36" viewBox="0 0 38 36"><rect x="0" y="4.500" width="28.500" height="25.500" rx="5" fill="#62c285"/><rect x="6.500" y="0" width="4.500" height="8" rx="2.200" fill="#62c285"/><rect x="17.500" y="0" width="4.500" height="8" rx="2.200" fill="#62c285"/><path d="M8 15.500 h13 M8 22 h7" stroke="#e9f6ec" stroke-width="3.200" stroke-linecap="round"/><path d="M19.500 32 L33 18.500" stroke="#e9f6ec" stroke-width="11" stroke-linecap="round"/><path d="M20 31.500 L32.500 19" stroke="#62c285" stroke-width="6.500" stroke-linecap="round"/><path d="M16 35 l1.500-5.500 4 4z" fill="#62c285"/></svg>
<span id="t53" class="t" style="top:505.4px;font-size:26px;color:#1f2430;-webkit-text-stroke:0.4px;left:729.5px;letter-spacing:-0.06px;">Interview Completed</span>
<span id="t54" class="t" style="top:507.6px;font-size:21px;color:#1f2430;-webkit-text-stroke:0.2px;left:976px;letter-spacing:0.14px;">(4M ago)</span>
<svg style="left:1075px;top:513px" width="22" height="14" viewBox="0 0 22 14"><path d="M2 2.500 L11 11.500 L20 2.500" fill="none" stroke="#111" stroke-width="2.600" stroke-linecap="round" stroke-linejoin="round"/></svg>
<div style="left:2073px;top:420px;width:161px;height:63.5px;background:#fff;border:2px solid #cbd5e1;border-radius:26px;"></div>
<span id="t55" class="t" style="top:437.9px;font-size:29px;color:#000;-webkit-text-stroke:0.35px;left:2099px;letter-spacing:-0.35px;transform:scaleX(0.9631);transform-origin:0 50%;">Chat</span>
<svg style="left:2177px;top:439px" width="30" height="29" viewBox="0 0 30 29"><path d="M6 1.500 h18 a4.500 4.500 0 0 1 4.500 4.500 v10 a4.500 4.500 0 0 1-4.500 4.500 h-9.500 l-6 5.500 v-5.500 h-2.500 a4.500 4.500 0 0 1-4.500-4.500 v-10 a4.500 4.500 0 0 1 4.500-4.500z" fill="none" stroke="#000" stroke-width="2.400" stroke-linejoin="round"/><path d="M8 8.500 h14 M8 13.500 h9" stroke="#000" stroke-width="2.400" stroke-linecap="round"/></svg>
<div style="left:2250px;top:420px;width:209px;height:63.5px;background:#0a1feb;border-radius:26px;"></div>
<span id="t56" class="t" style="top:437.9px;font-size:29px;color:#fff;-webkit-text-stroke:0.35px;left:2274px;letter-spacing:-0.48px;">Advance</span>
<svg style="left:2404px;top:440px" width="30" height="24" viewBox="0 0 30 24"><path d="M2 13 L10.500 21.500 L28 2" fill="none" stroke="#fff" stroke-width="2.600" stroke-linecap="round" stroke-linejoin="round"/></svg>
<div style="left:2475px;top:420px;width:175px;height:63.5px;background:#d94f2b;border-radius:26px;"></div>
<span id="t57" class="t" style="top:437.9px;font-size:29px;color:#fff;-webkit-text-stroke:0.35px;left:2499px;letter-spacing:-0.35px;transform:scaleX(0.9570);transform-origin:0 50%;">Reject</span>
<svg style="left:2594px;top:437px" width="30" height="30" viewBox="0 0 30 30"><circle cx="15" cy="15" r="12.800" fill="none" stroke="#fff" stroke-width="2.400"/><path d="M10.500 10.500 L19.500 19.500 M19.500 10.500 L10.500 19.500" stroke="#fff" stroke-width="2.400" stroke-linecap="round"/></svg>
<div style="left:2666px;top:420px;width:266px;height:63.5px;background:#fff;border:2px solid #cbd5e1;border-radius:26px;"></div>
<span id="t58" class="t" style="top:437.9px;font-size:29px;color:#000;-webkit-text-stroke:0.35px;left:2692px;letter-spacing:-0.33px;">More Actions</span>
<div style="left:2877.0px;top:449px;width:5.0px;height:5px;background:#000;border-radius:50%;"></div>
<div style="left:2888.5px;top:449px;width:5.0px;height:5px;background:#000;border-radius:50%;"></div>
<div style="left:2900.0px;top:449px;width:5.0px;height:5px;background:#000;border-radius:50%;"></div>
<div style="left:491px;top:602px;width:336px;height:1082px;background:#fff;border-top:2px solid #dfe6f0;"></div>
<div style="left:491px;top:620px;width:324px;height:80px;background:#e8f1fc;"></div>
<span id="t59" class="t" style="top:647.0px;font-size:27px;color:#0f172a;left:532px;letter-spacing:-0.51px;">Resume</span>
<span id="t60" class="t" style="top:743.0px;font-size:27px;color:#64748b;left:532px;letter-spacing:0.04px;">Cover Letter</span>
<span id="t61" class="t" style="top:843.0px;font-size:27px;color:#64748b;left:532px;letter-spacing:0.02px;">Screening Questions</span>
<span id="t62" class="t" style="top:943.0px;font-size:27px;color:#64748b;left:532px;letter-spacing:0.36px;">Activity Log</span>
<span id="t63" class="t" style="top:1043.0px;font-size:27px;color:#64748b;left:532px;letter-spacing:0.30px;">Documents</span>
<span id="t64" class="t" style="top:1143.0px;font-size:27px;color:#64748b;left:532px;letter-spacing:0.16px;">Scorecards</span>
<span id="t65" class="t" style="top:1243.0px;font-size:27px;color:#64748b;left:532px;letter-spacing:-0.34px;">Reviews</span>
<span id="t66" class="t" style="top:1343.0px;font-size:27px;color:#64748b;left:532px;letter-spacing:0.13px;">Interview(s)</span>
<span id="t67" class="t" style="top:1443.0px;font-size:27px;color:#64748b;left:532px;letter-spacing:0.29px;">Offer Management</span>
<span id="t68" class="t" style="top:1543.0px;font-size:27px;color:#64748b;left:532px;letter-spacing:-0.32px;transform:scaleX(0.9698);transform-origin:0 50%;">Emails</span>
<span id="t69" class="t" style="top:1643.0px;font-size:27px;color:#64748b;left:532px;letter-spacing:0.11px;">Notes</span>
<div style="left:815px;top:604px;width:11px;height:1078px;background:#d9d9d9;border-radius:5px;"></div>
<div style="left:815px;top:604px;width:11px;height:974px;background:#b2b2b4;border-radius:5px 5px 5px 5px;"></div>
<div style="left:827px;top:604px;width:2137px;height:1080px;background:#f1f5fd;"></div>
<div style="left:827px;top:602px;width:2137px;height:125px;background:#fff;border:2px solid #dfe6f0;border-left:none;border-top-right-radius:26px;"></div>
<span id="t70" class="t" style="top:647.5px;font-size:33px;color:#0a16a8;-webkit-text-stroke:0.4px;left:859.5px;letter-spacing:-0.40px;transform:scaleX(0.9511);transform-origin:0 50%;">Resume</span>
<div style="left:2237px;top:628px;width:285px;height:72px;background:#eef1f6;border-radius:26px;"></div>
<div style="left:2245px;top:636px;width:150px;height:56px;background:#fff;border-radius:20px;box-shadow:0 2px 5px rgba(100,110,130,.25);"></div>
<span id="t71" class="t" style="top:649.4px;font-size:29px;color:#111;-webkit-text-stroke:0.35px;left:2278px;letter-spacing:-0.35px;transform:scaleX(0.9540);transform-origin:0 50%;">Parsed</span>
<span id="t72" class="t" style="top:649.4px;font-size:29px;color:#64748b;left:2432px;letter-spacing:-0.35px;transform:scaleX(0.8900);transform-origin:0 50%;">PDF</span>
<div style="left:2546px;top:632px;width:384px;height:63px;background:#fff;border:2px solid #cbd5e1;border-radius:26px;box-shadow:0 1px 3px rgba(100,110,130,.2);"></div>
<span id="t73" class="t" style="top:651.4px;font-size:29px;color:#111;left:2573px;letter-spacing:0.02px;">Current Resume</span>
<svg style="left:2878px;top:649px" width="22" height="30" viewBox="0 0 22 30"><path d="M1.500 11 L11 1.500 L20.500 11 M1.500 19 L11 28.500 L20.500 19" fill="none" stroke="#111" stroke-width="2" stroke-linecap="round" stroke-linejoin="round"/></svg>
<div style="left:2952px;top:727px;width:12px;height:957px;background:#d9d9d9;"></div>
<div style="left:2953px;top:726px;width:10px;height:203px;background:#b2b2b4;border-radius:5px;"></div>
<div style="left:844px;top:742px;width:2092px;height:246px;background:#fff;border:2px solid #e2e8f0;border-radius:22px;"></div>
<div style="left:844px;top:824px;width:2092px;height:2px;background:#e2e8f0;"></div>
<svg style="left:880px;top:765px" width="36" height="36" viewBox="0 0 24 24" fill="none" stroke="#000" stroke-width="1.700" stroke-linecap="round" stroke-linejoin="round"><g transform="rotate(-38 12 12) translate(24 0) scale(-1 1)"><path d="M8 13v-7.500a1.500 1.500 0 0 1 3 0v6.500"/><path d="M11 5.500v-2a1.500 1.500 0 1 1 3 0v8.500"/><path d="M14 5.500a1.500 1.500 0 0 1 3 0v6.500"/><path d="M17 7.500a1.500 1.500 0 0 1 3 0v8.500a6 6 0 0 1 -6 6h-2h.208a6 6 0 0 1 -5.012 -2.700a69.740 69.740 0 0 1 -.196 -.300c-.312 -.479 -1.407 -2.388 -3.286 -5.728a1.500 1.500 0 0 1 .536 -2.022a1.867 1.867 0 0 1 2.280 .280l1.470 1.470"/></g><path d="M1.500 17.500a6 6 0 0 0 2.500 3.800"/><path d="M0.200 20.200a7 7 0 0 0 1.800 2.400"/></svg>
<span id="t74" class="t" style="top:769.1px;font-size:31px;color:#1c1f26;-webkit-text-stroke:0.4px;left:933.5px;letter-spacing:0.83px;">Overview</span>
<span id="t75" class="t" style="top:868.7px;font-size:28px;color:#1c1f26;left:878px;letter-spacing:-0.33px;">Dynamic and results-oriented professional with over 7 years of experience supporting C-suite executives as a Chief of Staff and Executive Assistant. Expertise in</span>
<span id="t76" class="t" style="top:916.7px;font-size:28px;color:#1c1f26;left:878px;letter-spacing:-0.34px;">streamlining operations, implementing strategic initiatives, and enhancing executive effectiveness.</span>
<div style="left:844px;top:1005px;width:2092px;height:293px;background:#fff;border:2px solid #e2e8f0;border-radius:22px;"></div>
<div style="left:844px;top:1086px;width:2092px;height:2px;background:#e2e8f0;"></div>
<svg style="left:880px;top:1029px" width="32" height="34" viewBox="0 0 32 34"><path d="M3 32 V3 Q10 -1 16 3 T29 3 V21 Q22 25 16 21 T3 21" fill="none" stroke="#000" stroke-width="2.600" stroke-linejoin="round" stroke-linecap="round"/></svg>
<span id="t77" class="t" style="top:1031.2px;font-size:31px;color:#1c1f26;-webkit-text-stroke:0.4px;left:933.5px;letter-spacing:0.06px;">Skills &amp; Expertises</span>
<div style="left:877px;top:1120px;width:418px;height:64px;background:#eef1f6;border-radius:32px;"></div>
<span id="t78" class="t" style="top:1137.7px;font-size:28px;color:#1c1f26;-webkit-text-stroke:0.45px;left:901.5px;letter-spacing:-0.17px;">High-Stakes Decision Support</span>
<div style="left:1311px;top:1120px;width:416px;height:64px;background:#eef1f6;border-radius:32px;"></div>
<span id="t79" class="t" style="top:1137.7px;font-size:28px;color:#1c1f26;-webkit-text-stroke:0.45px;left:1335.5px;letter-spacing:-0.24px;">Executive Leadership Support</span>
<div style="left:1743px;top:1120px;width:624px;height:64px;background:#eef1f6;border-radius:32px;"></div>
<span id="t80" class="t" style="top:1137.7px;font-size:28px;color:#1c1f26;-webkit-text-stroke:0.45px;left:1767.5px;letter-spacing:-0.20px;">Operational Efficiency &amp; Workflow Optimization</span>
<div style="left:2384px;top:1120px;width:268px;height:64px;background:#eef1f6;border-radius:32px;"></div>
<span id="t81" class="t" style="top:1137.7px;font-size:28px;color:#1c1f26;-webkit-text-stroke:0.45px;left:2408.5px;letter-spacing:-0.48px;">LinkedIn Recruiter</span>
<div style="left:877px;top:1200px;width:421px;height:64px;background:#eef1f6;border-radius:32px;"></div>
<span id="t82" class="t" style="top:1217.7px;font-size:28px;color:#1c1f26;-webkit-text-stroke:0.45px;left:901.5px;letter-spacing:-0.43px;">Strategic Planning &amp; Execution</span>
<div style="left:1314px;top:1200px;width:439px;height:64px;background:#eef1f6;border-radius:32px;"></div>
<span id="t83" class="t" style="top:1217.7px;font-size:28px;color:#1c1f26;-webkit-text-stroke:0.45px;left:1338.5px;letter-spacing:-0.37px;">Project &amp; Program Management</span>
<div style="left:1769px;top:1200px;width:542px;height:64px;background:#eef1f6;border-radius:32px;"></div>
<span id="t84" class="t" style="top:1217.7px;font-size:28px;color:#1c1f26;-webkit-text-stroke:0.45px;left:1793.5px;letter-spacing:-0.23px;">High-Level Communication &amp; Diplomacy</span>
<div style="left:2328px;top:1200px;width:569px;height:64px;background:#eef1f6;border-radius:32px;"></div>
<span id="t85" class="t" style="top:1217.7px;font-size:28px;color:#1c1f26;-webkit-text-stroke:0.45px;left:2352.5px;letter-spacing:-0.36px;">Financial Oversight &amp; Budget Management</span>
<div style="left:844px;top:1315px;width:2092px;height:385px;background:#fff;border:2px solid #e2e8f0;border-radius:22px;border-bottom:none;border-radius:22px 22px 0 0;"></div>
<div style="left:844px;top:1396px;width:2092px;height:2px;background:#e2e8f0;"></div>
<svg style="left:880px;top:1340px" width="34" height="31" viewBox="0 0 34 31"><rect x="1.500" y="8" width="31" height="21.500" rx="3.500" fill="none" stroke="#000" stroke-width="2.600"/><path d="M11 8 V4.500 a3 3 0 0 1 3-3 h6 a3 3 0 0 1 3 3 V8" fill="none" stroke="#000" stroke-width="2.600"/><path d="M1.500 17.500 H32.500" stroke="#000" stroke-width="2.600"/><rect x="13.500" y="15" width="7" height="6" rx="1" fill="#000"/></svg>
<span id="t86" class="t" style="top:1340.7px;font-size:31px;color:#1c1f26;-webkit-text-stroke:0.4px;left:933.5px;letter-spacing:0.43px;">Experience</span>
<div style="left:877px;top:1430px;width:95px;height:95px;background:#eef1f6;border:2px solid #e2e8f0;border-radius:22px;"></div>
<svg style="left:906px;top:1453px" width="38" height="50" viewBox="0 0 38 50"><rect x="2.500" y="2.500" width="33" height="45" rx="5" fill="none" stroke="#5b6578" stroke-width="4"/><g fill="#5b6578"><rect x="10" y="11" width="6" height="6" rx="1.500"/><rect x="22" y="11" width="6" height="6" rx="1.500"/><rect x="10" y="23" width="6" height="6" rx="1.500"/><rect x="22" y="23" width="6" height="6" rx="1.500"/><path d="M14 48 V38 a3 3 0 0 1 3-3 h4 a3 3 0 0 1 3 3 V48z"/></g></svg>
<span id="t87" class="t" style="top:1438.7px;font-size:31px;color:#1c1f26;-webkit-text-stroke:0.4px;left:997.5px;letter-spacing:0.27px;">Executive Assistant</span>
<span id="t88" class="t" style="top:1488.2px;font-size:28px;color:#5f6b80;font-style:italic;left:998px;letter-spacing:-0.37px;">Nikki Beach Hospitality Group</span>
<span id="t89" class="t" style="top:1488.2px;font-size:28px;color:#5f6b80;font-weight:700;left:1372px;transform:translateX(-50%);">·</span>
<span id="t90" class="t" style="top:1488.2px;font-size:28px;color:#5f6b80;font-style:italic;left:1385px;letter-spacing:-0.16px;">Mar 2024 - Present</span>
<span id="t91" class="t" style="top:1440.2px;font-size:28px;color:#5f6b80;font-style:italic;right:85px;letter-spacing:-0.34px;transform:scaleX(0.9566);transform-origin:100% 50%;">Miami, FL</span>
<div style="left:925px;top:1558px;width:4px;height:126px;background:#e2e8f0;border-radius:2px;"></div>
<span id="t92" class="t" style="top:1568.7px;font-size:28px;color:#1c1f26;left:997.5px;letter-spacing:-0.37px;">Provide strategic administrative assistance to the CEO, overseeing critical tasks such as managing high-level correspondence, coordinating executive</span>
<span id="t93" class="t" style="top:1616.7px;font-size:28px;color:#1c1f26;left:997.5px;letter-spacing:-0.33px;">calendars, organizing key meetings, and ensuring seamless internal and external communications on behalf of the executive office. Collaborate closely with</span>
<span id="t94" class="t" style="top:1664.7px;font-size:28px;color:#1c1f26;left:997.5px;letter-spacing:-0.38px;">senior leadership, including the Chief Marketing Officer (CMO) and Director of Public Relations, to facilitate and streamline operations across departments.</span>
</div>
<div style="left:467px;top:60px;width:48px;height:48px;background:#0b1eeb;border-radius:50%;"></div>
<svg style="left:480px;top:64px" width="26" height="38" viewBox="480 64 26 38"><path d="M487 70.500 L499.500 83 L487 95.500" fill="none" stroke="#fff" stroke-width="2.800" stroke-linecap="round" stroke-linejoin="round"/></svg>
<div style="left:0px;top:1701px;width:11px;height:11px;background:radial-gradient(circle at 100% 0,rgba(255,255,255,0) 10px,#f2eef2 11px);"></div>
<div style="left:2977px;top:1701px;width:11px;height:11px;background:radial-gradient(circle at 0 0,rgba(255,255,255,0) 10px,#f2eef2 11px);"></div>
</div>
<script>(function(){var w=document.documentElement.clientWidth;if(w&&Math.abs(w-2988)>4){var b=document.body;b.style.transformOrigin="0 0";b.style.transform="scale("+(w/2988)+")";}})();</script>
</body></html>
